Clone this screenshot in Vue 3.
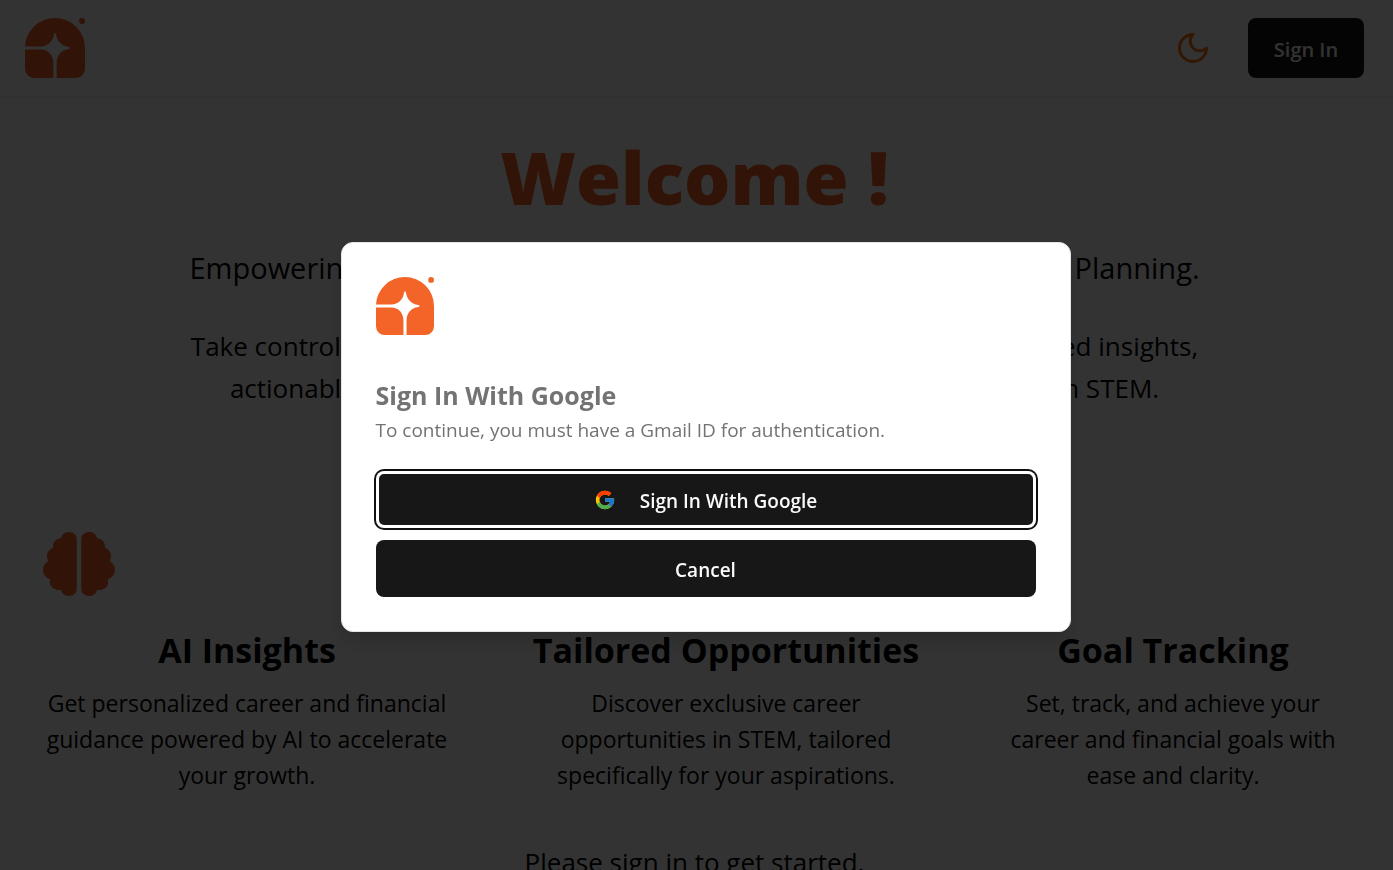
<script setup>
import { ref } from 'vue'

const open = ref(true)
const features = [
  { title: 'AI Insights', icon: true, text: 'Get personalized career and financial guidance powered by AI to accelerate your growth.' },
  { title: 'Tailored Opportunities', text: 'Discover exclusive career opportunities in STEM, tailored specifically for your aspirations.' },
  { title: 'Goal Tracking', text: 'Set, track, and achieve your career and financial goals with ease and clarity.' },
]
const logo =
  'M30 0A30 30 0 0 1 60 30V51A9 9 0 0 1 51 60H31.6V45C31.6 37 37 31.6 43 31.2L45 30.6V29.4L43 28.8C37 28 32 23 31.2 17L30.6 15H29.4L28.8 17C28 23 23 28.4 16 28.4H0A30 30 0 0 1 30 0Z' +
  'M0 31.6H16C23 31.6 28.4 37 28.4 45V60H9A9 9 0 0 1 0 51Z' +
  'M57 0A3 3 0 1 1 57 6A3 3 0 1 1 57 0Z'
</script>

<template>
  <div class="page">
    <header class="nav">
      <a class="brand" href="#" aria-label="Home">
        <svg viewBox="0 0 60 60" aria-hidden="true"><path :d="logo" /></svg>
      </a>
      <div class="nav-actions">
        <button class="theme" type="button" aria-label="Toggle theme">
          <svg viewBox="0 0 24 24" aria-hidden="true"><path d="M12 3a6 6 0 0 0 9 9 9 9 0 1 1-9-9Z" /></svg>
        </button>
        <button class="dark-btn sign-in" type="button" @click="open = true">Sign In</button>
      </div>
    </header>

    <main>
      <section class="hero">
        <h1>Welcome !</h1>
        <p class="lead">Empowering Women in STEM with AI-Driven Career and Financial Planning.</p>
        <p class="sub">
          Take control of your career and finances through personalized AI-powered insights,
          actionable advice and opportunities built to help women to succeed in STEM.
        </p>
      </section>

      <section class="features">
        <article v-for="f in features" :key="f.title" class="feature">
          <div class="feature-icon">
            <svg v-if="f.icon" viewBox="0 0 512 512" preserveAspectRatio="none" aria-hidden="true">
              <path d="M184 0c30.9 0 56 25.1 56 56V456c0 30.9-25.1 56-56 56c-28.9 0-52.7-21.9-55.7-50.1c-5.2 1.4-10.7 2.1-16.3 2.1c-35.3 0-64-28.7-64-64c0-7.4 1.3-14.6 3.6-21.2C21.4 367.4 0 338.2 0 304c0-31.9 12-54 36-70C31 220 28 207 28 192c0-30.7 18-56.3 46-66.6C72 121 71 116 71 110c0-29.9 24-57 57.3-60.1C131.3 21.9 155.1 0 184 0z" />
              <path d="M328 0c28.9 0 52.6 21.9 55.7 49.9C417 53 441 80 441 110c0 6-1 11-3 15.4c28 10.3 46 35.9 46 66.6c0 15-3 28-8 42c24 16 36 38 36 70c0 34.2-21.4 63.4-51.6 74.8c2.3 6.6 3.6 13.8 3.6 21.2c0 35.3-28.7 64-64 64c-5.6 0-11.1-.7-16.3-2.1c-3 28.2-26.8 50.1-55.7 50.1c-30.9 0-56-25.1-56-56V56c0-30.9 25.1-56 56-56z" />
            </svg>
          </div>
          <h2>{{ f.title }}</h2>
          <p>{{ f.text }}</p>
        </article>
      </section>

      <p class="prompt">Please sign in to get started.</p>
    </main>

    <div v-if="open" class="overlay">
      <div class="dialog" role="dialog" aria-modal="true" aria-labelledby="dialog-title">
        <svg class="dialog-logo" viewBox="0 0 60 60" aria-hidden="true"><path :d="logo" /></svg>
        <h2 id="dialog-title">Sign In With Google</h2>
        <p>To continue, you must have a Gmail ID for authentication.</p>
        <button class="dark-btn google" type="button">
          <svg viewBox="0 0 48 48" aria-hidden="true">
            <path fill="#FFC107" d="M43.6 20.1H42V20H24v8h11.3C33.7 32.7 29.2 36 24 36c-6.6 0-12-5.4-12-12s5.4-12 12-12c3.1 0 5.8 1.2 8 3l5.7-5.7C34 6.1 29.3 4 24 4 13 4 4 13 4 24s9 20 20 20 20-9 20-20c0-1.3-.1-2.6-.4-3.9z" />
            <path fill="#FF3D00" d="M6.3 14.7l6.6 4.8C14.7 15.1 19 12 24 12c3.1 0 5.8 1.2 8 3l5.7-5.7C34 6.1 29.3 4 24 4 16.3 4 9.7 8.3 6.3 14.7z" />
            <path fill="#4CAF50" d="M24 44c5.2 0 9.9-2 13.4-5.2l-6.2-5.2C29.2 35.1 26.7 36 24 36c-5.2 0-9.6-3.3-11.3-7.9l-6.5 5C9.5 39.6 16.2 44 24 44z" />
            <path fill="#1976D2" d="M43.6 20.1H42V20H24v8h11.3c-.8 2.2-2.2 4.2-4.1 5.6l6.2 5.2C37 39.2 44 34 44 24c0-1.3-.1-2.6-.4-3.9z" />
          </svg>
          <span>Sign In With Google</span>
        </button>
        <button class="dark-btn" type="button" @click="open = false"><span>Cancel</span></button>
      </div>
    </div>
  </div>
</template>

<style>
body {
  margin: 0;
}
</style>

<style scoped>
.page {
  --orange: #f26427;
  height: 100vh;
  overflow: hidden;
  background: #fff;
  color: #000;
  font-family: 'Open Sans', 'Noto Sans', sans-serif;
}
h1, h2, p {
  margin: 0;
}
button {
  font-family: inherit;
  cursor: pointer;
}
svg {
  display: block;
}
.nav {
  display: flex;
  align-items: center;
  justify-content: space-between;
  padding: 18px 29px 18px 25px;
  border-bottom: 2px solid #f6f6f6;
}
.brand svg {
  width: 60px;
  height: 60px;
  fill: var(--orange);
}
.nav-actions {
  display: flex;
  align-items: center;
  gap: 37px;
}
.theme {
  padding: 0;
  border: 0;
  background: none;
}
.theme svg {
  width: 36px;
  height: 36px;
  fill: none;
  stroke: #f97316;
  stroke-width: 2;
  stroke-linecap: round;
  stroke-linejoin: round;
}
.dark-btn {
  display: flex;
  align-items: center;
  justify-content: center;
  border: 0;
  border-radius: 8px;
  background: #171717;
  color: #fafafa;
  font-size: 19px;
  font-weight: 600;
}
.sign-in {
  min-width: 116px;
  height: 60px;
  padding: 2px 24px 0;
  font-size: 20px;
}
.hero {
  display: flex;
  flex-direction: column;
  align-items: center;
  padding: 43px 4px 0 0;
  text-align: center;
}
h1 {
  color: var(--orange);
  font-size: 73px;
  font-weight: 800;
  line-height: 72px;
}
.lead {
  margin-top: 34px;
  font-size: 29px;
  line-height: 42px;
  white-space: nowrap;
}
.sub {
  max-width: 1040px;
  margin-top: 36px;
  font-size: 26px;
  line-height: 42px;
}
.features {
  display: grid;
  grid-template-columns: 408fr 382fr 344fr;
  gap: 84px;
  padding: 123px 48px 0 43px;
}
.feature {
  display: flex;
  flex-direction: column;
  align-items: center;
  min-width: 0;
  text-align: center;
}
.feature-icon {
  align-self: stretch;
  height: 64px;
  margin-bottom: 30px;
}
.feature-icon svg {
  width: 72px;
  height: 64px;
  fill: var(--orange);
}
.feature h2 {
  font-size: 34px;
  font-weight: 700;
  line-height: 48px;
  white-space: nowrap;
}
.feature p {
  margin-top: 11px;
  font-size: 23px;
  line-height: 36px;
}
.prompt {
  margin-top: 48px;
  padding-right: 4px;
  font-size: 26px;
  line-height: 42px;
  text-align: center;
}
.overlay {
  position: fixed;
  inset: 0;
  display: grid;
  place-items: center;
  padding: 4px 0 0 18px;
  background: rgba(0, 0, 0, 0.8);
}
.dialog {
  display: flex;
  flex-direction: column;
  box-sizing: border-box;
  width: 100%;
  max-width: 730px;
  padding: 34px;
  border: 1px solid #e5e5e5;
  border-radius: 12px;
  background: #fff;
  color: #737373;
  box-shadow: 0 10px 20px rgba(0, 0, 0, 0.15);
}
.dialog-logo {
  width: 58px;
  height: 58px;
  margin-bottom: 42px;
  fill: var(--orange);
}
.dialog h2 {
  font-size: 25px;
  font-weight: 700;
  line-height: 36px;
}
.dialog p {
  margin-bottom: 24px;
  font-size: 19px;
  line-height: 34px;
}
.dialog .dark-btn {
  height: 57px;
}
.dialog .dark-btn span {
  padding-top: 2px;
}
.dialog .dark-btn + .dark-btn {
  margin-top: 12px;
}
.google {
  gap: 24px;
  box-shadow: inset 0 0 0 3px #fff, 0 0 0 2px #101010;
}
.google svg {
  width: 22px;
  height: 22px;
}
</style>
